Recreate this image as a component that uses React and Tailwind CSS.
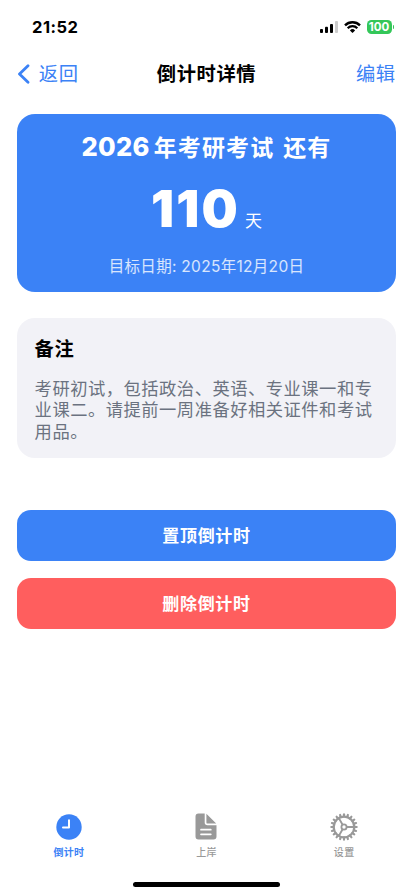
import { useState } from 'react';

const teeth = [...Array(20)].map((_, i) => i * 18);

function StatusBar() {
  return (
    <div className="h-[54px] flex justify-between pl-8 pr-[19px] pt-[17px]">
      <span className="text-[16.5px] leading-5 font-bold tracking-[0.5px]">21:52</span>
      <div className="flex h-5 items-center gap-[6px]">
        <svg width="18" height="12" viewBox="0 0 18 12">
          <rect x="0" y="8" width="3" height="4" rx="0.9" />
          <rect x="5" y="5.7" width="3" height="6.3" rx="0.9" />
          <rect x="10" y="3" width="3" height="9" rx="0.9" />
          <rect x="15" y="0" width="3" height="12" rx="0.9" fill="#cccccc" />
        </svg>
        <svg width="17" height="12" viewBox="0 0 17 12" fill="none" stroke="#000">
          <path d="M1 4.4a10.6 10.6 0 0 1 15 0" strokeWidth="2.4" />
          <path d="M3.7 7.2a6.8 6.8 0 0 1 9.6 0" strokeWidth="2.3" />
          <path d="M8.5 12 5.9 9.4a3.7 3.7 0 0 1 5.2 0z" fill="#000" stroke="none" />
        </svg>
        <div className="flex items-center gap-px">
          <span className="w-[25px] h-[13.5px] rounded-[4.5px] bg-[#34c759] text-white text-[11.5px] leading-[14.5px] font-bold text-center">
            100
          </span>
          <span className="w-[1.5px] h-1 rounded-r-full bg-[#34c759]" />
        </div>
      </div>
    </div>
  );
}

function ClockIcon() {
  return (
    <svg width="26" height="26" viewBox="0 0 26 26">
      <circle cx="13" cy="13" r="12.7" fill="#3b82f6" />
      <path d="M13 6.2V13.6H7" fill="none" stroke="#fff" strokeWidth="2" strokeLinecap="round" strokeLinejoin="round" />
    </svg>
  );
}

function DocIcon() {
  return (
    <svg width="22" height="27" viewBox="0 0 22 27">
      <path d="M3.5 0.5H9.7V9.5a2.8 2.8 0 0 0 2.8 2.8H21.5V23.5a3 3 0 0 1-3 3H3.5a3 3 0 0 1-3-3V3.5a3 3 0 0 1 3-3z" fill="#999" />
      <path d="M11.4 0.7 21.2 10.6H12.6a1.2 1.2 0 0 1-1.2-1.2z" fill="#999" />
      <path d="M6 16.7H15.8M6 21.3H15.8" stroke="#fff" strokeWidth="1.7" strokeLinecap="round" />
    </svg>
  );
}

function GearIcon() {
  return (
    <svg width="28" height="28" viewBox="0 0 28 28" fill="none" stroke="#999">
      {teeth.map((a) => (
        <path key={a} d="M14 1.3V3.6" strokeWidth="2.1" strokeLinecap="round" transform={`rotate(${a} 14 14)`} />
      ))}
      <circle cx="14" cy="14" r="10.3" strokeWidth="2.2" />
      <circle cx="14" cy="14" r="2.6" strokeWidth="1.8" />
      <path d="M16.7 14H24M12.6 11.7 9 5.4M12.6 16.3 9 22.6" strokeWidth="1.9" />
    </svg>
  );
}

const tabs = [
  { id: 'countdown', label: '倒计时', icon: ClockIcon },
  { id: 'shore', label: '上岸', icon: DocIcon },
  { id: 'settings', label: '设置', icon: GearIcon },
];

export default function App() {
  const [active, setActive] = useState('countdown');

  return (
    <div
      lang="zh-CN"
      className="w-full h-screen flex flex-col bg-white text-black overflow-hidden font-['Inter','Noto_Sans_CJK_SC',sans-serif]"
    >
      <StatusBar />

      <header className="h-10 shrink-0 grid grid-cols-3 items-center px-[17.3px] text-[19.3px] leading-6 tracking-[0.6px]">
        <button className="flex items-center gap-[8.5px] text-[#3b82f6]">
          <svg width="13" height="20" viewBox="0 0 13 20" fill="none" stroke="#3b82f6" strokeWidth="2.8" strokeLinecap="round" strokeLinejoin="round">
            <path d="M11 1.7 2.5 10 11 18.3" />
          </svg>
          返回
        </button>
        <h1 className="font-bold text-center whitespace-nowrap">倒计时详情</h1>
        <button className="text-right text-[#3b82f6]">编辑</button>
      </header>

      <main className="flex-1 flex flex-col px-[17.3px] pt-5">
        <section className="h-[177.5px] shrink-0 rounded-[18px] bg-[#3b82f6] text-white flex flex-col items-center">
          <h2 className="mt-[17px] h-8 leading-8 text-[23px] font-bold tracking-[1.1px] whitespace-pre">
            <span className="text-[25.5px] font-extrabold tracking-[0.3px] mr-1">2026</span>年考研考试<span className="ml-[9px]">还有</span>
          </h2>
          <div className="mt-[16px] h-[60px] flex items-baseline gap-[5px]">
            <span className="text-[51px] leading-[60px] font-black tracking-[2.2px]">110</span>
            <span className="text-[17px] leading-6">天</span>
          </div>
          <p className="mt-[16px] h-6 leading-6 text-[15.5px] tracking-[0.3px] text-white/80">
            目标日期: 2025年12月20日
          </p>
        </section>

        <section className="mt-[26px] h-[140.5px] shrink-0 rounded-[18px] bg-[#f2f2f7] px-[17.3px] pt-[19px]">
          <h3 className="text-[19.3px] leading-6 font-bold tracking-[0.7px]">备注</h3>
          <p className="mt-[17px] text-[17.3px] leading-[21.7px] tracking-[0.5px] text-[#6b7280]">
            考研初试，包括政治、英语、专业课一和专业课二。请提前一周准备好相关证件和考试用品。
          </p>
        </section>

        <div className="mt-[51.5px] flex flex-col gap-[17px] text-white text-[17px] font-bold tracking-[0.7px]">
          <button className="h-[51px] pt-[3px] rounded-[14px] bg-[#3b82f6]">置顶倒计时</button>
          <button className="h-[51px] pt-[3px] rounded-[14px] bg-[#ff5e5e]">删除倒计时</button>
        </div>
      </main>

      <nav className="h-[69px] shrink-0 grid grid-cols-3">
        {tabs.map(({ id, label, icon: Icon }) => (
          <button
            key={id}
            onClick={() => setActive(id)}
            className={`flex flex-col items-center ${active === id ? 'text-[#3b82f6] font-bold' : 'text-[#999] font-medium'}`}
          >
            <span className="h-7 flex items-center">
              <Icon />
            </span>
            <span className="mt-[3px] text-[10px] leading-4 tracking-[0.3px]">{label}</span>
          </button>
        ))}
      </nav>
      <div className="h-[14.5px] shrink-0 flex justify-center">
        <div className="w-[147px] h-[5px] rounded-full bg-black" />
      </div>
    </div>
  );
}
